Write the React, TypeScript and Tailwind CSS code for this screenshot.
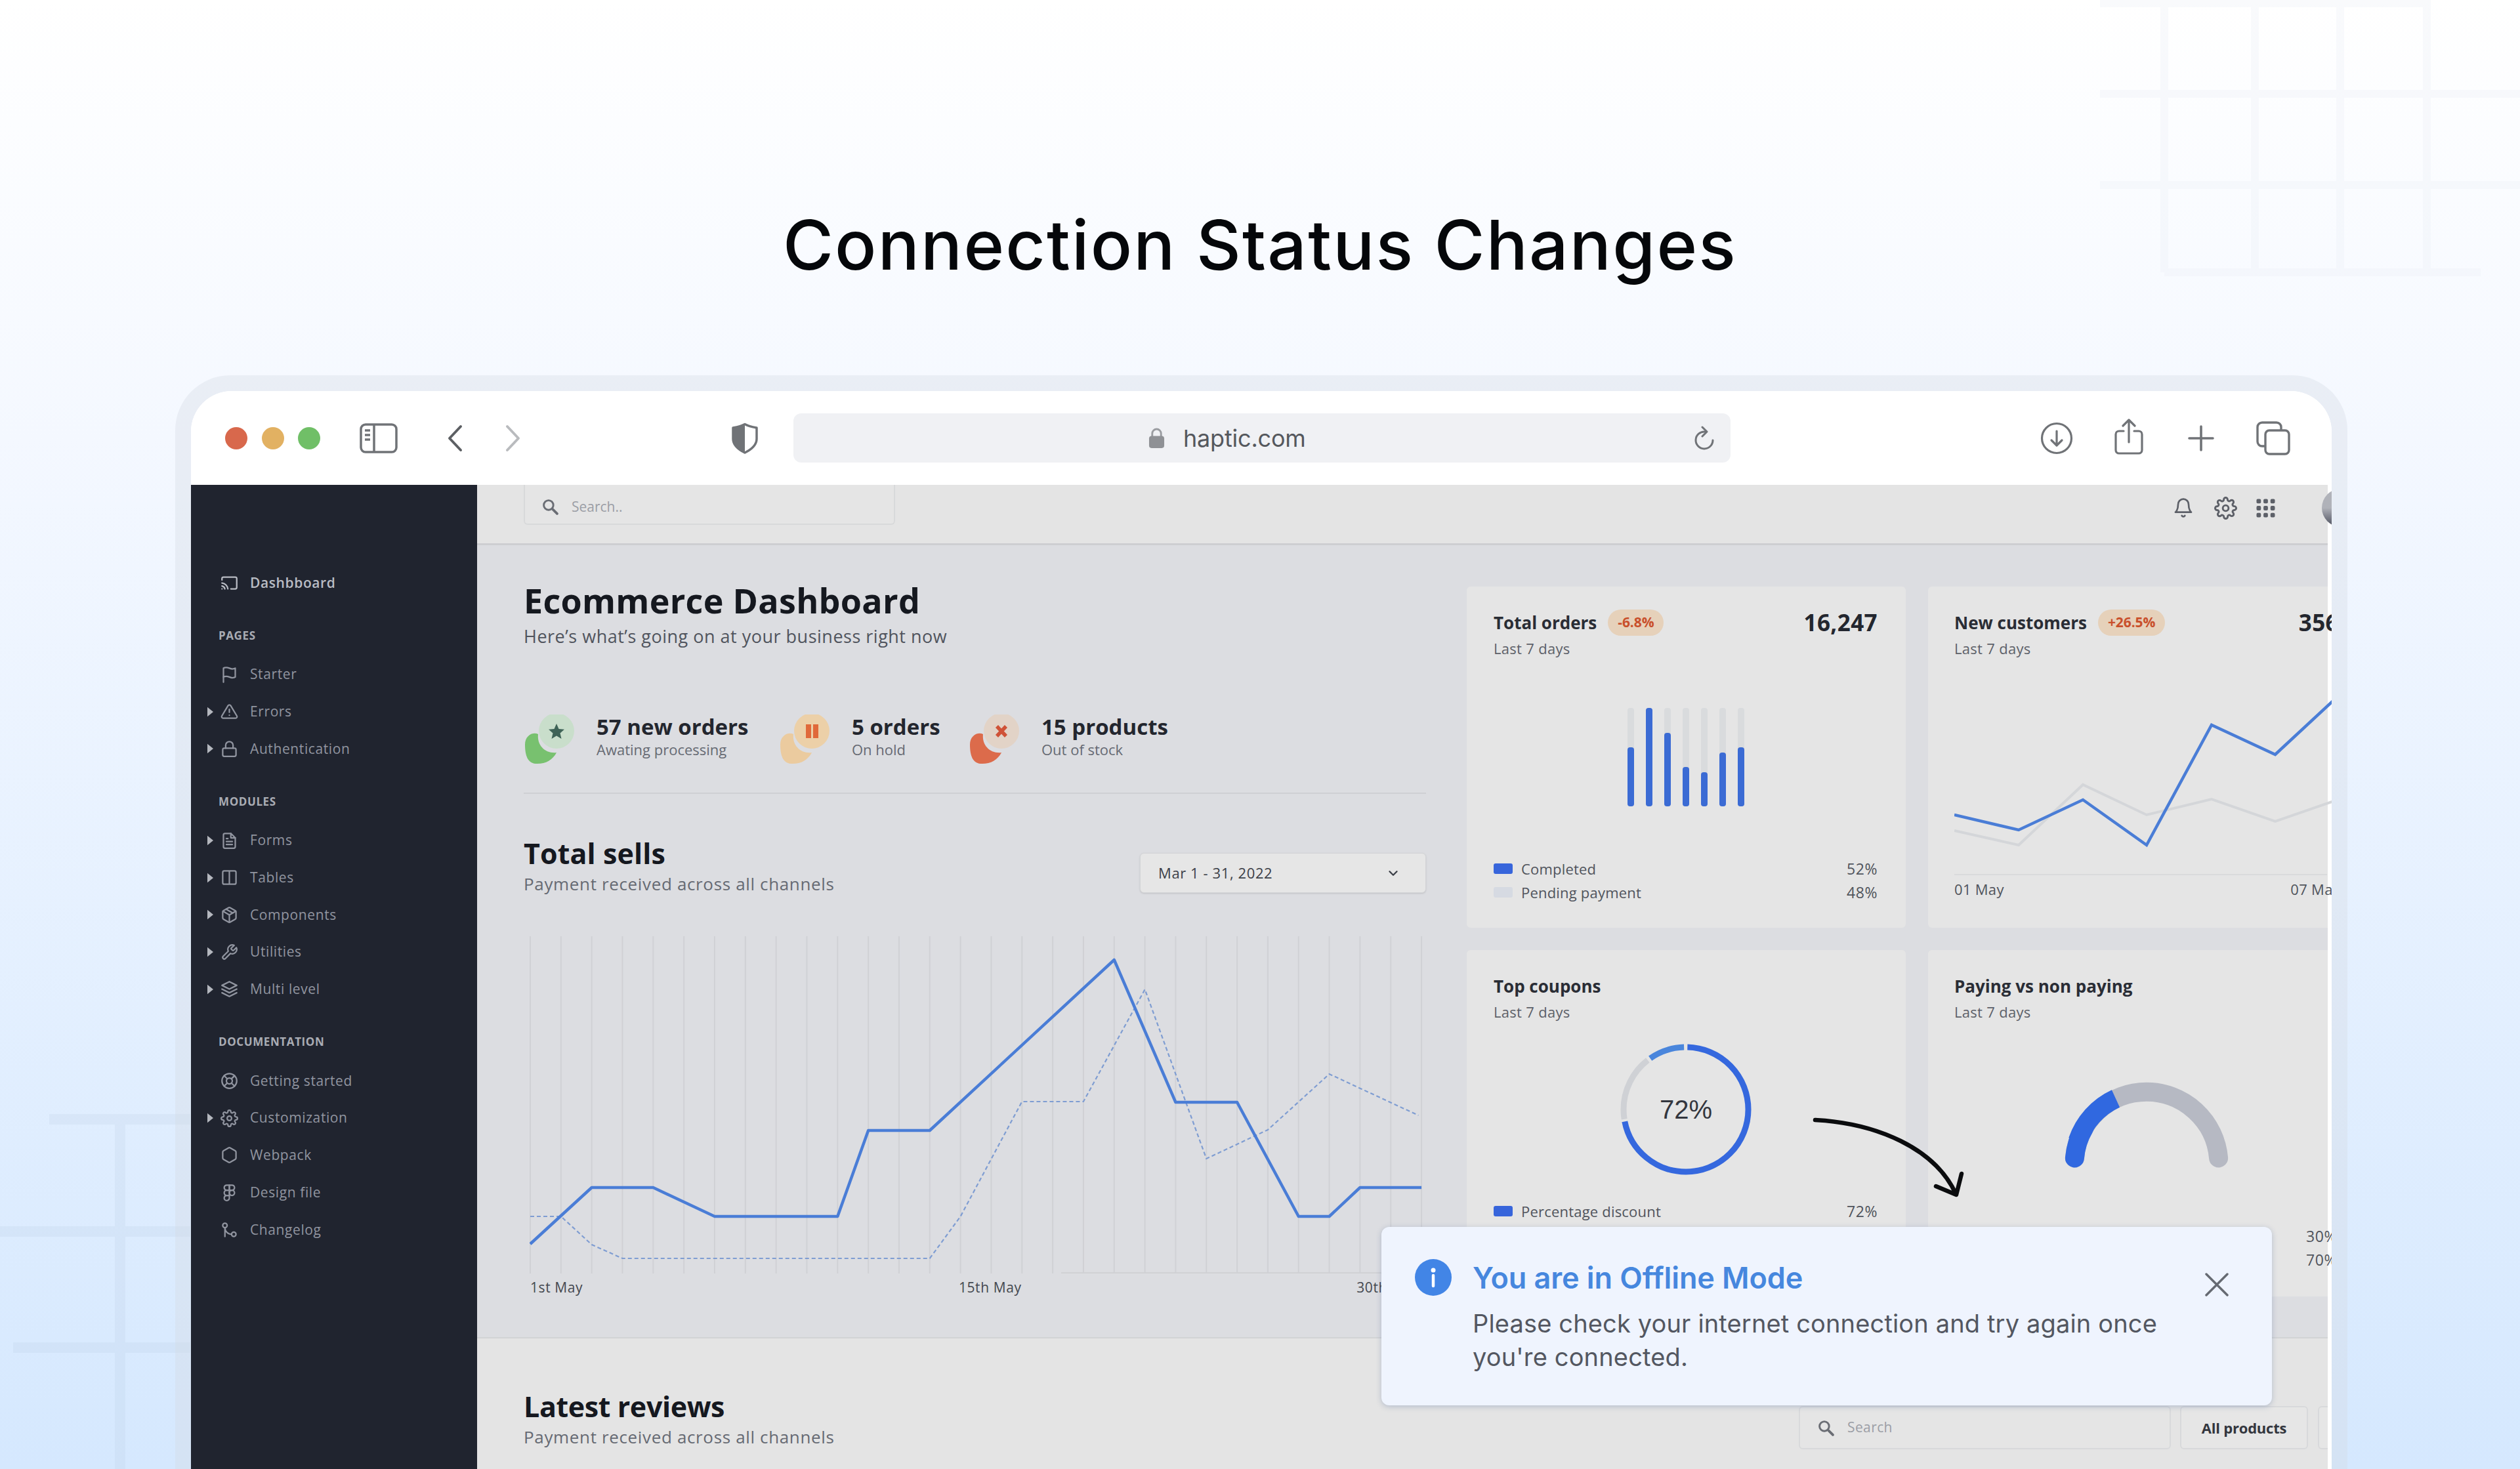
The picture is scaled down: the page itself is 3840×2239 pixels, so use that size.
import React from 'react';
import {
  FiAlertTriangle,
  FiBell,
  FiCast,
  FiChevronDown,
  FiColumns,
  FiFigma,
  FiFileText,
  FiFlag,
  FiGitMerge,
  FiHexagon,
  FiLayers,
  FiLifeBuoy,
  FiLock,
  FiPackage,
  FiSettings,
  FiTool,
} from 'react-icons/fi';
import type { IconType } from 'react-icons';

type NavItem = { label: string; icon: IconType; expandable?: boolean };
type NavSection = { title: string; items: NavItem[] };

const SECTIONS: NavSection[] = [
  {
    title: 'PAGES',
    items: [
      { label: 'Starter', icon: FiFlag },
      { label: 'Errors', icon: FiAlertTriangle, expandable: true },
      { label: 'Authentication', icon: FiLock, expandable: true },
    ],
  },
  {
    title: 'MODULES',
    items: [
      { label: 'Forms', icon: FiFileText, expandable: true },
      { label: 'Tables', icon: FiColumns, expandable: true },
      { label: 'Components', icon: FiPackage, expandable: true },
      { label: 'Utilities', icon: FiTool, expandable: true },
      { label: 'Multi level', icon: FiLayers, expandable: true },
    ],
  },
  {
    title: 'DOCUMENTATION',
    items: [
      { label: 'Getting started', icon: FiLifeBuoy },
      { label: 'Customization', icon: FiSettings, expandable: true },
      { label: 'Webpack', icon: FiHexagon },
      { label: 'Design file', icon: FiFigma },
      { label: 'Changelog', icon: FiGitMerge },
    ],
  },
];

const ORDER_BARS = [60, 100, 75, 40, 35, 55, 60];

// [day index, y] pairs on the 514px tall sells chart
const SELLS: [number, number][] = [
  [0, 469], [2, 383], [4, 383], [6, 427], [10, 427], [11, 296], [13, 296],
  [19, 36], [21, 253], [23, 253], [25, 427], [26, 427], [27, 383], [29, 383],
];
const SELLS_PREV: [number, number][] = [
  [0, 427], [1, 427], [2, 470], [3, 491], [13, 491], [14, 427], [16, 252],
  [18, 252], [20, 81], [22, 339], [24, 295], [26, 210], [28.9, 273],
];

const DAY = 46.83;
const toPoints = (data: [number, number][]) => data.map(([d, y]) => `${d * DAY + 1},${y}`).join(' ');

const SearchIcon = ({ className }: { className?: string }) => (
  <svg viewBox="0 0 24 24" fill="none" stroke="currentColor" strokeWidth="2.800" strokeLinecap="round" className={className}>
    <circle cx="9.5" cy="9.5" r="7" />
    <path d="M15 15l7 7" strokeWidth="3.600" />
  </svg>
);

const NavRow = ({ item, active }: { item: NavItem; active?: boolean }) => {
  const Icon = item.icon;
  return (
    <div className={`flex h-[56.7px] items-center pl-[25px] text-[21px] tracking-[0.6px] ${active ? 'font-semibold tracking-[0.3px] text-[#b9bcc4]' : 'font-medium text-[#9195a0]'}`}>
      <svg viewBox="0 0 10 16" className={`h-[16px] w-[9px] ${item.expandable ? '' : 'invisible'}`}>
        <path d="M0 0l10 8-10 8z" fill="#b4b7be" />
      </svg>
      <Icon className="ml-[11px] size-[27px]" strokeWidth={2} />
      <span className="ml-[18px] whitespace-nowrap">{item.label}</span>
    </div>
  );
};

const Sidebar = () => (
  <div className="h-full w-[436px] shrink-0 bg-[#20242f] pt-[121px]">
    <NavRow item={{ label: 'Dashbboard', icon: FiCast }} active />
    {SECTIONS.map((section) => (
      <div key={section.title}>
        <div className="h-[83px] pt-[42px] pl-[42px] text-[17px] leading-[20px] font-bold tracking-[0.6px] text-[#a9acb4]">{section.title}</div>
        {section.items.map((item) => (
          <NavRow key={item.label} item={item} />
        ))}
      </div>
    ))}
  </div>
);

const Toolbar = () => (
  <div className="flex h-[143px] items-center bg-white pl-[52px] text-[#707377]">
    <div className="flex gap-[21.5px]">
      <div className="size-[34px] rounded-full bg-[#d8684c]" />
      <div className="size-[34px] rounded-full bg-[#e2b162]" />
      <div className="size-[34px] rounded-full bg-[#70bf67]" />
    </div>
    <svg viewBox="0 0 58 46" fill="none" stroke="currentColor" strokeWidth="3.5" className="ml-[60px] h-[46px] w-[58px]">
      <rect x="2" y="2" width="54" height="42" rx="7" />
      <path d="M22 2v42M8 11h8M8 18h8M8 25h8" />
    </svg>
    <svg viewBox="0 0 24 42" fill="none" stroke="#5c5f63" strokeWidth="4" strokeLinecap="round" strokeLinejoin="round" className="ml-[75px] h-[42px] w-[24px]">
      <path d="M21 3L4 21l17 18" />
    </svg>
    <svg viewBox="0 0 24 42" fill="none" stroke="#b9bbbe" strokeWidth="4" strokeLinecap="round" strokeLinejoin="round" className="ml-[65px] h-[42px] w-[24px]">
      <path d="M3 3l17 18L3 39" />
    </svg>
    <svg viewBox="0 0 42 48" className="ml-[320px] h-[48px] w-[42px]">
      <path d="M21 2.500C15 6 9 7 3 8v17c0 10 8 16 18 21 10-5 18-11 18-21V8c-6-1-12-2-18-5.500z" fill="none" stroke="#707377" strokeWidth="3.500" strokeLinejoin="round" />
      <path d="M21 2.500C15 6 9 7 3 8v17c0 10 8 16 18 21z" fill="#707377" />
    </svg>
    <div className="ml-[53px] flex h-[75px] w-[1428px] items-center rounded-xl bg-[#f0f1f4]">
      <svg viewBox="0 0 26 34" className="ml-[541px] h-[33px] w-[25px]">
        <path d="M6 15V10a7 7 0 0 1 14 0v5" fill="none" stroke="#9b9da1" strokeWidth="3" />
        <rect x="1" y="14" width="24" height="19" rx="4" fill="#8f9195" />
      </svg>
      <span className="ml-[28px] font-['Inter'] text-[36px] tracking-[-0.2px] text-[#55585d]">haptic.com</span>
      <svg viewBox="0 0 32 38" fill="none" stroke="currentColor" strokeWidth="3" strokeLinecap="round" strokeLinejoin="round" className="mr-[24px] ml-auto h-[38px] w-[32px]">
        <path d="M17 9A13 13 0 1 0 29 22" />
        <path d="M13 2l7 7-7 7" />
      </svg>
    </div>
    <svg viewBox="0 0 50 50" fill="none" stroke="currentColor" strokeWidth="3.200" strokeLinecap="round" strokeLinejoin="round" className="ml-[472px] size-[50px]">
      <circle cx="25" cy="25" r="22.500" />
      <path d="M25 14v21M17 28l8 8 8-8" />
    </svg>
    <svg viewBox="0 0 46 56" fill="none" stroke="currentColor" strokeWidth="3.200" strokeLinecap="round" strokeLinejoin="round" className="mb-[4px] ml-[62px] h-[56px] w-[46px]">
      <path d="M15 19H8a5 5 0 0 0-5 5v24a5 5 0 0 0 5 5h30a5 5 0 0 0 5-5V24a5 5 0 0 0-5-5h-7" />
      <path d="M23 36V3M14 11l9-9 9 9" />
    </svg>
    <svg viewBox="0 0 40 40" fill="none" stroke="currentColor" strokeWidth="3.600" strokeLinecap="round" className="ml-[67px] size-[40px]">
      <path d="M20 2v36M2 20h36" />
    </svg>
    <svg viewBox="0 0 52 52" fill="none" stroke="currentColor" strokeWidth="3.400" strokeLinejoin="round" className="ml-[64px] size-[52px]">
      <rect x="14" y="14" width="36" height="36" rx="6" />
      <path d="M14 38H9a7 7 0 0 1-7-7V9a7 7 0 0 1 7-7h22a7 7 0 0 1 7 7v5" />
    </svg>
  </div>
);

const TopBar = () => (
  <div className="flex h-[92px] w-[2820px] border-b-[3px] border-[#cdced1] bg-[#e4e4e4] pl-[71px]">
    <div className="flex h-[61px] w-[566px] items-center rounded-b-md border-2 border-t-0 border-[#d8d9da] bg-[#e5e5e5] pt-[8px] pl-[26px]">
      <SearchIcon className="size-[25px] text-[#6a6d74]" />
      <span className="ml-[20px] text-[21px] text-[#9b9ea5]">Search..</span>
    </div>
    <div className="ml-auto flex h-[70px] items-center text-[#5d6068]">
      <FiBell className="size-[32px]" strokeWidth={2} />
      <FiSettings className="ml-[31px] size-[35px]" strokeWidth={2} />
      <svg viewBox="0 0 30 30" fill="currentColor" className="ml-[29px] size-[29px]">
        {[4, 15, 26].map((y) => [4, 15, 26].map((x) => <rect key={`${x}-${y}`} x={x - 3.5} y={y - 3.5} width="7" height="7" rx="2" />))}
      </svg>
      <div className="-mr-[49px] ml-[71px] size-[58px] shrink-0 rounded-full bg-linear-to-b from-[#b0b2b9] from-50% to-[#4c4f5c]" />
    </div>
  </div>
);

type StatProps = { value: string; note: string; badge: string; blob: string; glyph: React.ReactNode; className: string };

const Stat = ({ value, note, badge, blob, glyph, className }: StatProps) => (
  <div className={`flex shrink-0 ${className}`}>
    <svg viewBox="0 0 80 76" className="h-[76px] w-[80px]">
      <path d="M2 46C2 32 14 26 22 30c-2 18 12 30 28 28C44 70 32 76 18 75 6 74 2 62 2 46z" fill={blob} />
      <circle cx="50" cy="25" r="27" fill={badge} />
      {glyph}
    </svg>
    <div className="ml-[31px]">
      <div className="text-[33px] leading-[38px] font-bold whitespace-nowrap text-[#23262e]">{value}</div>
      <div className="mt-[1px] text-[22px] leading-[28px] whitespace-nowrap text-[#666a73]">{note}</div>
    </div>
  </div>
);

const SellsChart = () => (
  <svg viewBox="0 0 1361 514" fill="none" className="mt-[64px] ml-[9px] h-[514px] w-[1361px]">
    {Array.from({ length: 30 }, (_, i) => (
      <path key={i} d={`M${i * DAY + 1} 0V514`} stroke="#d0d1d5" strokeWidth="2" />
    ))}
    <path d="M810 513H1361" stroke="#d0d1d4" strokeWidth="2" />
    <polyline points={toPoints(SELLS_PREV)} stroke="#7f9dd2" strokeWidth="2.200" strokeDasharray="6 4" />
    <polyline points={toPoints(SELLS)} stroke="#4a7dd6" strokeWidth="4.500" strokeLinejoin="round" />
  </svg>
);

const CardHead = ({ title, badge, total }: { title: string; badge?: string; total?: string }) => (
  <>
    <div className="flex h-[40px] items-center">
      <span className="text-[26px] font-bold whitespace-nowrap text-[#2a2d35]">{title}</span>
      {badge && (
        <span className="ml-[17px] flex h-[40px] items-center rounded-full bg-[#e6d1ba] px-[15px] text-[21px] font-bold tracking-[-0.1px] text-[#c9502c]">{badge}</span>
      )}
      {total && <span className="ml-auto text-[35px] font-bold tracking-[0.4px] text-[#23262e]">{total}</span>}
    </div>
    <div className="mt-[5px] text-[22px] leading-[28px] tracking-[0.3px] text-[#5d6169]">Last 7 days</div>
  </>
);

const LegendRow = ({ label, value, swatch }: { label: string; value: string; swatch: string }) => (
  <div className="flex h-[36px] items-center text-[22px] tracking-[0.2px] whitespace-nowrap text-[#50545c]">
    <span className={`h-[16px] w-[29px] rounded-[3px] ${swatch}`} />
    <span className="ml-[13px]">{label}</span>
    <span className="ml-auto text-[23px] tracking-[0.6px]">{value}</span>
  </div>
);

const Cards = () => (
  <div className="grid grid-cols-[669px_609px] grid-rows-[520px_528px] gap-[34px] pt-[63px]">
    <div className="flex flex-col rounded-md bg-[#e5e5e5] pt-[35px] pr-[43px] pb-[36px] pl-[41px]">
      <CardHead title="Total orders" badge="-6.8%" total="16,247" />
      <div className="mt-[77px] flex h-[150px] justify-center gap-[18px]">
        {ORDER_BARS.map((h, i) => (
          <div key={i} className="flex w-[10px] items-end rounded-sm bg-[#d9dbdd]">
            <div className="w-full rounded-sm bg-[#3b6bd4]" style={{ height: `${h}%` }} />
          </div>
        ))}
      </div>
      <div className="mt-auto">
        <LegendRow label="Completed" value="52%" swatch="bg-[#3765db]" />
        <LegendRow label="Pending payment" value="48%" swatch="bg-[#d6dae2]" />
      </div>
    </div>

    <div className="w-[609px] rounded-l-md bg-[#e5e5e5] pt-[35px] pl-[40px]">
      <div className="w-[586px]">
        <CardHead title="New customers" badge="+26.5%" total="356" />
      </div>
      <svg viewBox="0 0 590 300" fill="none" className="mt-[39px] h-[300px] w-[590px]">
        <polyline points="0,225 98,247 196,155 293,201 392,177 489,211 587,177" stroke="#d4d6d9" strokeWidth="4" />
        <polyline points="0,201 98,224 196,178 293,247 392,64 489,109 587,18" stroke="#4a7dd6" strokeWidth="4.500" />
        <path d="M0 292H568" stroke="#d9dadb" strokeWidth="2" />
      </svg>
      <div className="flex w-[588px] justify-between text-[22px] leading-[28px] tracking-[0.3px] text-[#50545c]">
        <span>01 May</span>
        <span>07 May</span>
      </div>
    </div>

    <div className="flex flex-col rounded-md bg-[#e5e5e5] pt-[35px] pr-[43px] pl-[41px]">
      <CardHead title="Top coupons" />
      <svg viewBox="0 0 200 200" fill="none" className="mt-[35px] ml-[193px] size-[200px]">
        <g transform="rotate(-90 100 100)" strokeWidth="9">
          <circle cx="100" cy="100" r="95" pathLength="100" stroke="#cfd1d5" strokeDasharray="17 100" strokeDashoffset="-72.500" />
          <circle cx="100" cy="100" r="95" pathLength="100" stroke="#4a86dc" strokeDasharray="9.200 100" strokeDashoffset="-90.300" />
          <circle cx="100" cy="100" r="95" pathLength="100" stroke="#3568de" strokeDasharray="71.500 100" strokeDashoffset="-0.400" />
        </g>
        <text x="100" y="114" textAnchor="middle" fontFamily="Liberation Sans" fontSize="40" fill="#33363e">72%</text>
      </svg>
      <div className="mt-[37px]">
        <LegendRow label="Percentage discount" value="72%" swatch="bg-[#3765db]" />
      </div>
    </div>

    <div className="w-[609px] rounded-l-md bg-[#e5e5e5] pt-[35px] pl-[40px]">
      <CardHead title="Paying vs non paying" />
      <svg viewBox="0 0 250 132" fill="none" strokeWidth="29" className="mt-[93px] ml-[168px] h-[132px] w-[250px]">
        <path d="M15.400 116A110 110 0 0 1 234.600 116" stroke="#b6b9c3" strokeLinecap="round" />
        <path d="M20 90A110 110 0 0 1 78 25.500" stroke="#3068e0" />
        <path d="M15.400 116A110 110 0 0 1 30 70" stroke="#3068e0" strokeLinecap="round" />
      </svg>
      <div className="mt-[85px] w-[583px]">
        <LegendRow label="Paying customer" value="30%" swatch="bg-[#3765db]" />
        <LegendRow label="Non-paying customer" value="70%" swatch="bg-[#b6b9c3]" />
      </div>
    </div>
  </div>
);

const Overview = () => (
  <div className="flex h-[1207px] w-[2820px] bg-[#dcdde1] pl-[71px]">
    <div className="w-[1375px] shrink-0 pt-[54px]">
      <h2 className="text-[52px] leading-[60px] font-bold tracking-[0.3px] whitespace-nowrap text-[#15181f]">Ecommerce Dashboard</h2>
      <p className="mt-[7px] text-[27px] leading-[36px] tracking-[0.5px] whitespace-nowrap text-[#50545d]">Here’s what’s going on at your business right now</p>
      <div className="mt-[101px] flex h-[76px]">
        <Stat
          className="w-[389px]"
          value="57 new orders"
          note="Awating processing"
          badge="#c9decb"
          blob="#78c16f"
          glyph={<path d="M50 14l3.500 8 8.500.800-6.500 5.600 2 8.600-7.500-4.600-7.500 4.600 2-8.600-6.500-5.600 8.500-.800z" fill="#3f6357" />}
        />
        <Stat
          className="w-[289px]"
          value="5 orders"
          note="On hold"
          badge="#ecd0a8"
          blob="#ebcb9f"
          glyph={<path d="M41 15h8v21h-8zM52 15h8v21h-8z" fill="#e0693a" />}
        />
        <Stat
          className="w-[330px]"
          value="15 products"
          note="Out of stock"
          badge="#e2d3c7"
          blob="#dc6b4b"
          glyph={<path d="M43 18l14 15M57 18L43 33" stroke="#cf5237" strokeWidth="5.500" />}
        />
      </div>
      <div className="mt-[43px] h-[2px] bg-[#cfd0d4]" />
      <div className="mt-[66px] flex justify-between">
        <div>
          <h3 className="text-[43px] leading-[50px] font-bold tracking-[0.1px] text-[#15181f]">Total sells</h3>
          <p className="mt-[5px] text-[26px] leading-[32px] tracking-[0.65px] text-[#666a73]">Payment received across all channels</p>
        </div>
        <div className="mt-[24px] flex h-[61px] w-[436px] items-center justify-between rounded-md border border-[#d3d4d7] bg-[#e6e6e6] pr-[38px] pl-[27px] text-[22px] tracking-[0.6px] text-[#3c4048] shadow-sm">
          Mar 1 - 31, 2022
          <FiChevronDown className="size-[22px]" strokeWidth={2.6} />
        </div>
      </div>
      <SellsChart />
      <div className="mt-[7px] ml-[10px] flex w-[1355px] justify-between text-[21px] leading-[28px] tracking-[0.6px] text-[#44484f]">
        <span>1st May</span>
        <span className="mr-[-62px]">15th May</span>
        <span>30th May</span>
      </div>
    </div>
    <div className="ml-[62px] shrink-0">
      <Cards />
    </div>
  </div>
);

const Reviews = () => (
  <div className="flex h-[203px] w-[2820px] border-t-2 border-[#d2d3d5] bg-[#e4e4e4] pl-[71px]">
    <div className="pt-[79px]">
      <h3 className="text-[43px] leading-[50px] font-bold tracking-[-0.4px] text-[#15181f]">Latest reviews</h3>
      <p className="mt-[5px] text-[26px] leading-[32px] tracking-[0.65px] text-[#666a73]">Payment received across all channels</p>
    </div>
    <div className="mt-[103px] ml-auto flex h-[66px] text-[22px]">
      <div className="flex w-[567px] items-center rounded-md border-2 border-[#d8d9db] bg-[#e5e5e5] pl-[27px]">
        <SearchIcon className="size-[25px] text-[#6a6d74]" />
        <span className="ml-[20px] text-[21px] tracking-[0.4px] text-[#9b9ea5]">Search</span>
      </div>
      <div className="ml-[14px] flex w-[195px] items-center justify-center rounded-md border-2 border-[#d8d9db] bg-[#e6e6e6] font-bold tracking-[-0.2px] whitespace-nowrap text-[#33363e]">All products</div>
      <div className="ml-[15px] w-[15px] rounded-l-md border-2 border-r-0 border-[#d8d9db] bg-[#e6e6e6]" />
    </div>
  </div>
);

const Toast = () => (
  <div className="absolute top-[1870px] left-[2105px] flex h-[272px] w-[1357px] rounded-xl bg-[#eff4fe] pt-[46px] pl-[51px] font-['Inter'] shadow-[0_2px_8px_rgba(40,70,130,0.25)]">
    <svg viewBox="0 0 56 56" className="mt-[3px] size-[56px] shrink-0">
      <circle cx="28" cy="28" r="28" fill="#4285e6" />
      <circle cx="28" cy="17" r="3.500" fill="#fff" />
      <path d="M28 25v16" stroke="#fff" strokeWidth="4.500" strokeLinecap="round" />
    </svg>
    <div className="ml-[32px] w-[1081px]">
      <div className="text-[45px] leading-[64px] font-semibold tracking-[-0.1px] text-[#4687de]">You are in Offline Mode</div>
      <div className="mt-[12px] text-[38px] leading-[51px] tracking-[0.15px] text-[#535761]">
        Please check your internet connection and try again once
        <br />
        you're connected.
      </div>
    </div>
    <svg viewBox="0 0 36 36" fill="none" stroke="#666a72" strokeWidth="3.500" strokeLinecap="round" className="mt-[24px] ml-[35px] size-[36px] shrink-0">
      <path d="M2 2l32 32M34 2L2 34" />
    </svg>
  </div>
);

export default function App() {
  return (
    <div className="relative h-[2239px] w-[3840px] overflow-hidden bg-linear-to-b from-white via-[#f4f8ff] via-30% to-[#d5e8fe] font-['Open_Sans',sans-serif]">
      {/* faint corner grids */}
      <svg viewBox="0 0 640 440" fill="none" stroke="#e9eef5" strokeOpacity="0.28" strokeWidth="12" className="absolute top-0 right-0 h-[440px] w-[640px]">
        <path d="M98 0V415M236 0V415M366 0V415M498 0V415M0 5H500M0 143H640M0 282H640M98 415H580" />
      </svg>
      <svg viewBox="0 0 290 600" fill="none" stroke="#bccfe4" strokeOpacity="0.22" strokeWidth="16" className="absolute top-[1639px] left-0 h-[600px] w-[290px]">
        <path d="M75 67H290M0 238H290M20 415H290M183 67V600" />
      </svg>

      <h1 className="relative h-[572px] pt-[310px] text-center font-['Inter'] text-[105px] leading-[126px] font-medium tracking-[2.2px] text-[#05070a]">Connection Status Changes</h1>

      <div className="relative ml-[267px] h-[1700px] w-[3310px] rounded-t-[84px] bg-[#d3d9e3]/35 px-[24px] pt-[24px]">
        <div className="h-full overflow-hidden rounded-t-[62px] bg-white">
          <Toolbar />
          <div className="flex h-[1533px]">
            <Sidebar />
            <div className="w-[2826px] overflow-hidden">
              <TopBar />
              <Overview />
              <Reviews />
            </div>
          </div>
        </div>
      </div>

      <svg viewBox="0 0 250 150" fill="none" stroke="#0b0c0e" strokeWidth="6.500" strokeLinecap="round" strokeLinejoin="round" className="absolute top-[1690px] left-[2750px] h-[150px] w-[250px]">
        <path d="M16 17C110 22 198 60 230 129" />
        <path d="M200 118l31 13 8-32" />
      </svg>
      <Toast />
    </div>
  );
}
